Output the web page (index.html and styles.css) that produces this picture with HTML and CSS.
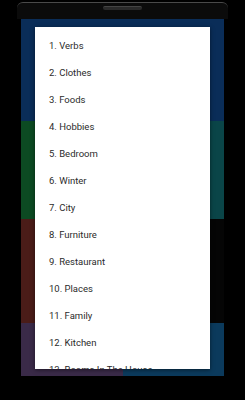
FILE: index.html
```html
<!DOCTYPE html>
<html lang="en">
<head>
  <meta charset="UTF-8" />
  <title>Topics</title>
  <link rel="stylesheet" href="styles.css">
</head>
<body>

<div class="phone">
  <div class="bezel">
    <div class="speaker"></div>
  </div>

  <div class="screen">
    <div class="tiles">
      <div class="tile blue wide"></div>
      <div class="tile green"></div>
      <div class="tile teal"></div>
      <div class="tile red"></div>
      <div class="tile dark"></div>
      <div class="tile purple"></div>
      <div class="tile sea"></div>
    </div>

    <div class="dialog">
      <ul class="topics">
        <li>1. Verbs</li>
        <li>2. Clothes</li>
        <li>3. Foods</li>
        <li>4. Hobbies</li>
        <li>5. Bedroom</li>
        <li>6. Winter</li>
        <li>7. City</li>
        <li>8. Furniture</li>
        <li>9. Restaurant</li>
        <li>10. Places</li>
        <li>11. Family</li>
        <li>12. Kitchen</li>
        <li>13. Rooms In The House</li>
      </ul>
    </div>
  </div>
</div>

</body>
</html>
```

FILE: styles.css
```css
body {
  margin: 0;
  background-color: #000;
  font-family: Roboto, "Liberation Sans", sans-serif;
}

.phone {
  width: 245px;
  height: 400px;
  background-color: #000;
  overflow: hidden;
}

.bezel {
  margin: 2px 17px 0;
  height: 16px;
  border-top: 1px solid #4a4a4a;
  border-radius: 6px 6px 0 0;
  background-color: #0b0b0b;
  display: flex;
  justify-content: center;
}

.speaker {
  margin-top: 3px;
  width: 39px;
  height: 3px;
  border-radius: 2px;
  background-color: #2a2a2a;
  border-top: 1px solid #444;
}

.screen {
  position: relative;
  margin: 0 21px;
  height: 357px;
}

.tiles {
  display: grid;
  grid-template-columns: 1fr 1fr;
  grid-template-rows: 102px 98px 104px 53px;
  height: 100%;
}

.tile.wide {
  grid-column: span 2;
}

.blue   { background-color: #0a2d58; }
.green  { background-color: #0c4a22; }
.teal   { background-color: #0a4548; }
.red    { background-color: #4a1c18; }
.dark   { background-color: #050505; }
.purple { background-color: #3a2a48; }
.sea    { background-color: #0b3a5c; }

.dialog {
  position: absolute;
  top: 8px;
  left: 14px;
  right: 14px;
  height: 342px;
  background-color: #fff;
  overflow: hidden;
  box-shadow: 0 1px 4px rgba(0, 0, 0, 0.5);
}

.topics {
  list-style: none;
  margin: 0;
  padding: 5px 0 0 14px;
}

.topics li {
  height: 27px;
  line-height: 27px;
  font-size: 9.5px;
  color: #2b2b2b;
}
```
